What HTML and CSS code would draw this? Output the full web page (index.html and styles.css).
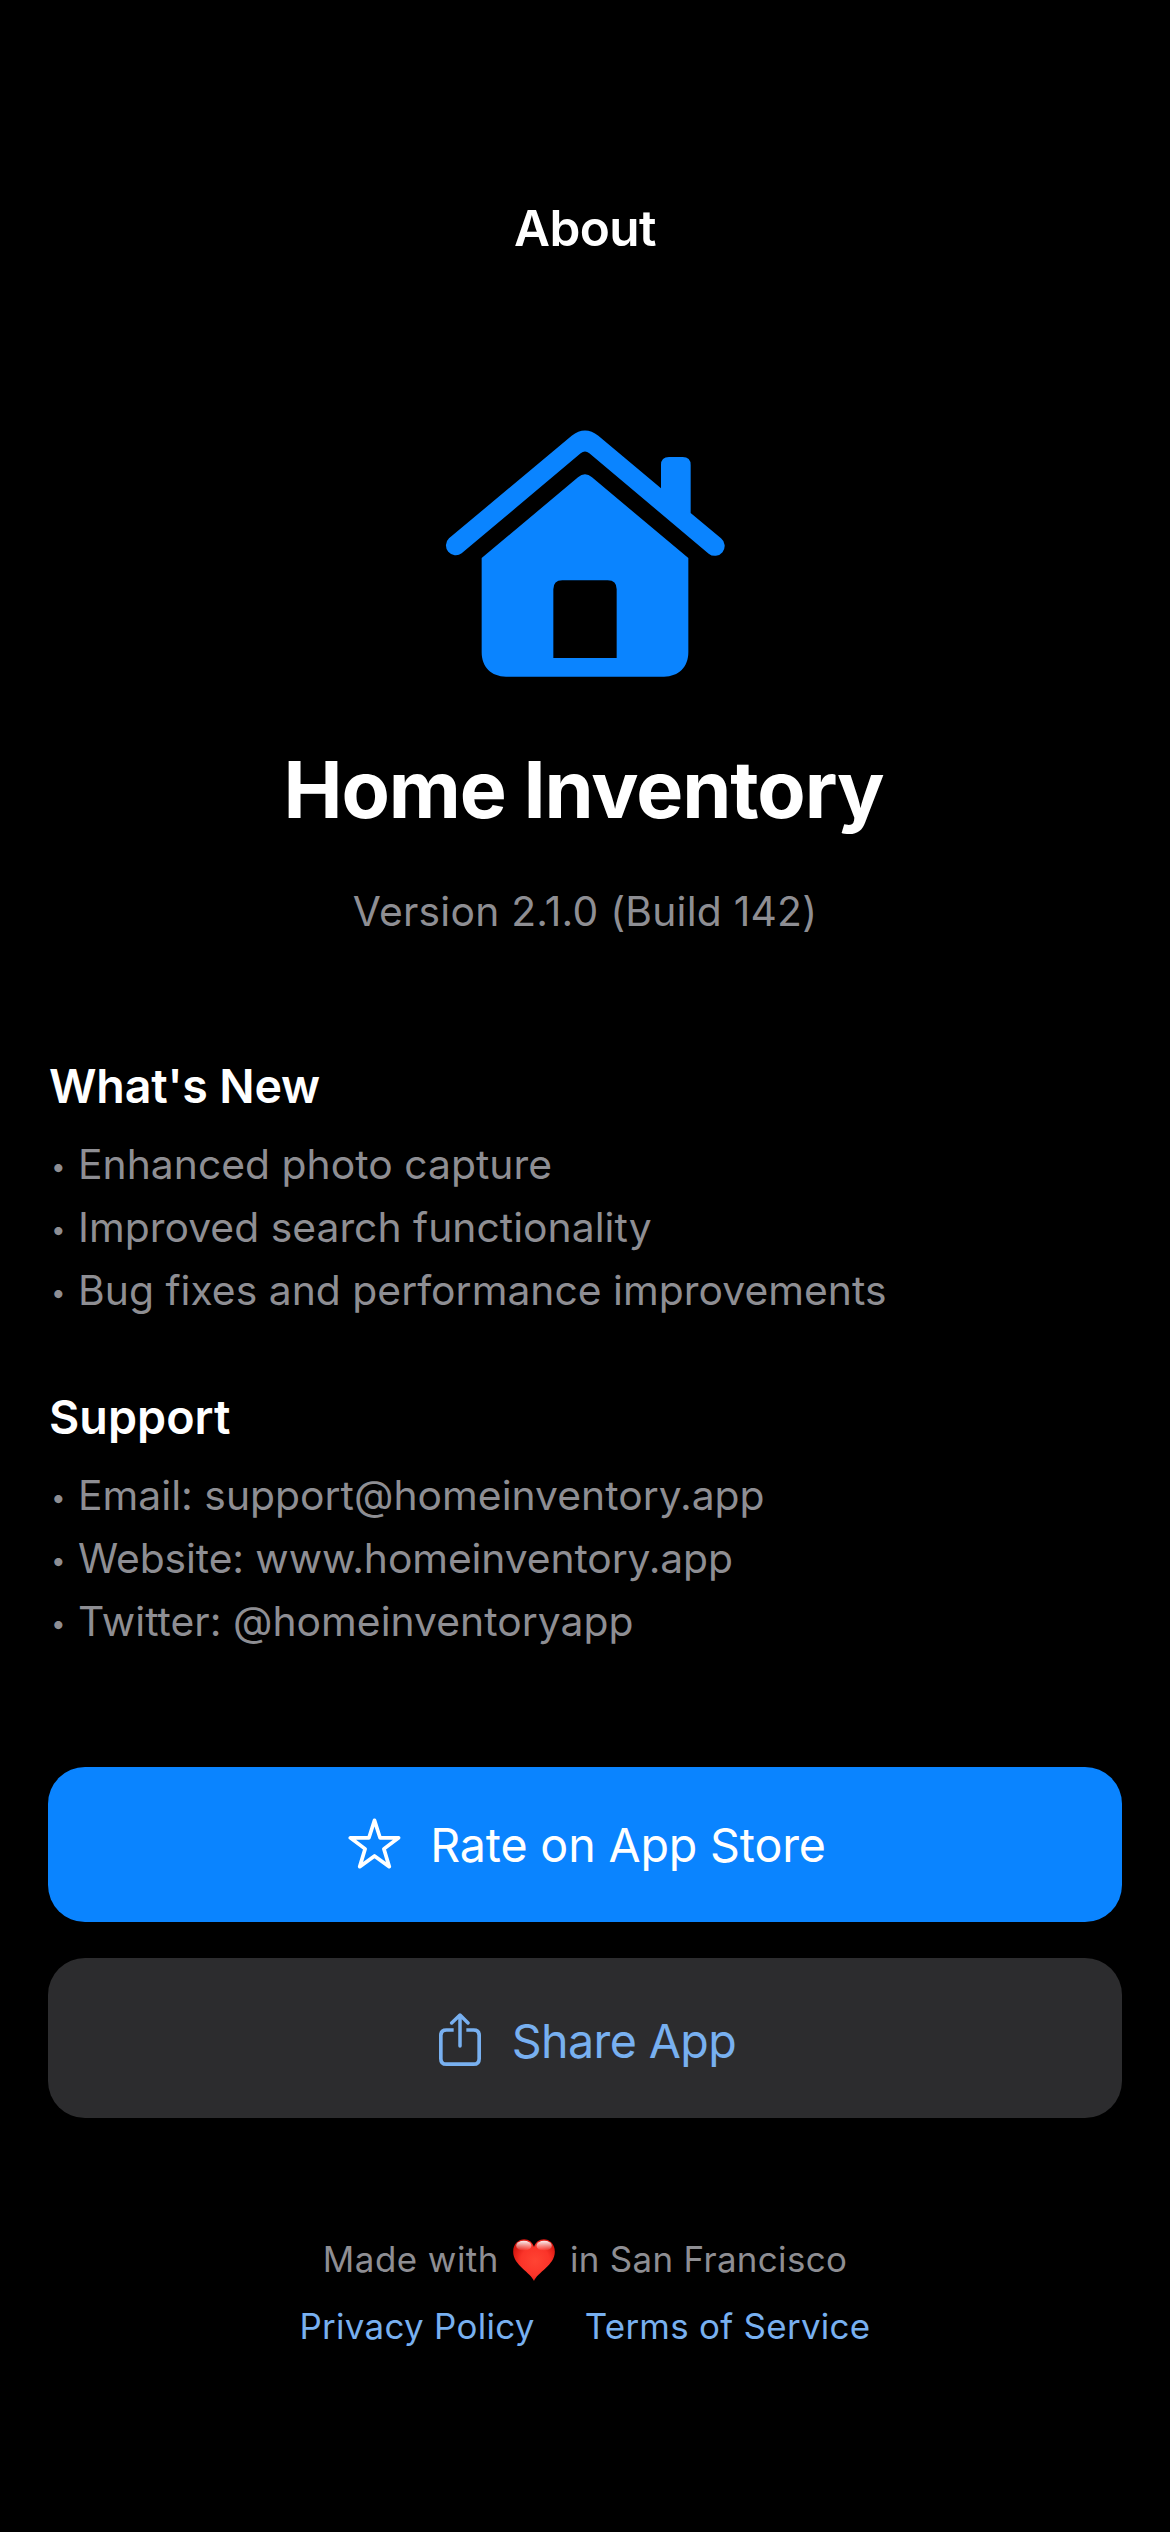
FILE: index.html
```html
<!DOCTYPE html>
<html lang="en">
<head>
<meta charset="utf-8">
<title>About</title>
<link rel="stylesheet" href="styles.css">
</head>
<body>
<main class="screen">
  <header class="nav">About</header>

  <section class="hero">
    <svg class="hero-icon" viewBox="75 90 840 741" aria-hidden="true">
      <path d="M455 107Q495 76 535 107L723 265V195Q723 171 747 171H788Q812 171 812 195V339L903 415A29.5 29.5 0 0 1 866 461L508 160Q495 149 482 160L125 460A29.5 29.5 0 0 1 87 415Z"/>
      <path fill-rule="evenodd" d="M185 474L474 232Q495 214 516 232L805 474V757C805 801 776 830 732 830H258C214 830 185 801 185 757ZM400 774H590V568Q590 541 563 541H427Q400 541 400 568Z"/>
    </svg>
    <h1 class="title">Home Inventory</h1>
    <p class="version">Version 2.1.0 (Build 142)</p>
  </section>

  <section class="info">
    <h2 class="info-title">What's New</h2>
    <ul class="list">
      <li><span class="bullet">•</span>Enhanced photo capture</li>
      <li><span class="bullet">•</span>Improved search functionality</li>
      <li><span class="bullet">•</span>Bug fixes and performance improvements</li>
    </ul>
  </section>

  <section class="info">
    <h2 class="info-title support">Support</h2>
    <ul class="list">
      <li><span class="bullet">•</span>Email: support@homeinventory.app</li>
      <li class="website"><span class="bullet">•</span>Website: www.homeinventory.app</li>
      <li><span class="bullet">•</span>Twitter: @homeinventoryapp</li>
    </ul>
  </section>

  <section class="actions">
    <button class="button rate">
      <svg class="icon-star" viewBox="954 206 158 152" aria-hidden="true">
        <path d="M1033 213L1049.500 265H1105L1061 298L1077 351L1033 319L989 351L1005 298L961 265H1016.500Z"/>
      </svg>
      <span>Rate on App Store</span>
    </button>
    <button class="button share">
      <svg class="icon-share" viewBox="117 789 126 159" aria-hidden="true">
        <path class="tray" d="M161 840H139Q122.500 840 122.500 856V926Q122.500 942.500 139 942.500H221Q237.500 942.500 237.500 926V856Q237.500 840 221 840H199"/>
        <path class="arrow" d="M180 797V888M155 819L180 795L204 819"/>
      </svg>
      <span>Share App</span>
    </button>
  </section>

  <footer class="footer">
    <p class="made">
      <span class="made-with">Made with</span>
      <svg class="heart" viewBox="68 42 125 126" role="img" aria-label="love">
        <defs>
          <radialGradient id="heart-fill" gradientUnits="userSpaceOnUse" cx="134" cy="108" r="72">
            <stop offset="0" stop-color="#ff4433"/>
            <stop offset=".6" stop-color="#fb3429"/>
            <stop offset="1" stop-color="#d4150d"/>
          </radialGradient>
          <linearGradient id="heart-shine" x1="0" y1="0" x2="0" y2="1">
            <stop offset="0" stop-color="#fff" stop-opacity=".95"/>
            <stop offset="1" stop-color="#fff" stop-opacity="0"/>
          </linearGradient>
        </defs>
        <path fill="url(#heart-fill)" d="M130.500 168C121 142 68 121 68 80C68 57 84 43 101 43C115 43 126 52 130.500 66C135 52 146 43 160 43C177 43 193 57 193 80C193 121 140 142 130.500 168Z"/>
        <ellipse fill="url(#heart-shine)" cx="100" cy="62" rx="23" ry="15"/>
        <ellipse fill="url(#heart-shine)" cx="161" cy="62" rx="23" ry="15"/>
      </svg>
      <span class="place">in San Francisco</span>
    </p>
    <nav class="links">
      <a>Privacy Policy</a>
      <a>Terms of Service</a>
    </nav>
  </footer>
</main>
</body>
</html>
```
FILE: styles.css
```css
* { box-sizing: border-box; margin: 0; padding: 0; }

body {
  background: #000;
  color: #fff;
  font-family: Inter, "Liberation Sans", sans-serif;
}

.screen {
  display: flex;
  flex-direction: column;
  width: 1170px;
  height: 2532px;
  padding: 198px 48px 0;
  white-space: nowrap;
}

.nav {
  font-size: 49.5px;
  font-weight: 600;
  line-height: 60px;
  letter-spacing: -0.59px;
  text-align: center;
}

.hero {
  display: flex;
  flex-direction: column;
  align-items: center;
  margin-top: 172px;
}

.hero-icon { width: 280px; height: 247px; fill: #0a84ff; }

.title {
  margin-top: 64px;
  padding-right: 3px;
  font-size: 79px;
  font-weight: 700;
  line-height: 96px;
  letter-spacing: -1.08px;
}

.version {
  margin-top: 44px;
  color: #8e8e93;
  font-size: 40.8px;
  line-height: 60px;
  letter-spacing: 0.23px;
}

.info { margin-top: 65px; padding-left: 1px; }
.hero + .info { margin-top: 115px; }

.info-title {
  font-size: 46.6px;
  font-weight: 600;
  line-height: 60px;
  letter-spacing: -0.19px;
}

.info-title.support { letter-spacing: 0.05px; }

.list {
  margin-top: 17px;
  color: #8e8e93;
  font-size: 40.8px;
  line-height: 63px;
  letter-spacing: 0.03px;
  list-style: none;
}

.list li { display: flex; height: 63px; }
.list .website { letter-spacing: -0.1px; }
.bullet { width: 29px; padding: 2px 0 0 2px; font-size: 26px; }

.actions {
  display: flex;
  flex-direction: column;
  gap: 36px;
  margin-top: 114px;
}

.button {
  display: flex;
  align-items: center;
  justify-content: center;
  border: 0;
  border-radius: 37px;
  font: 400 46.6px/60px Inter, "Liberation Sans", sans-serif;
}

.rate {
  gap: 29px;
  height: 155px;
  padding-left: 4px;
  background: #0a84ff;
  color: #fff;
  letter-spacing: -0.17px;
}

.share {
  gap: 31px;
  height: 160px;
  padding: 5px 0 0 5px;
  background: #2c2c2e;
  color: #78b0f0;
  letter-spacing: -0.6px;
}

.icon-star, .icon-share {
  fill: none;
  stroke: currentColor;
  stroke-width: 11;
  stroke-linejoin: round;
}

.icon-star { width: 53px; height: 51px; margin-bottom: 2px; }
.icon-share { width: 42px; height: 53px; margin-bottom: 2px; }
.arrow { stroke-linecap: round; stroke-width: 10.5; }

.footer {
  display: flex;
  flex-direction: column;
  gap: 13px;
  margin-top: 114px;
  font-size: 34.9px;
  line-height: 54px;
}

.made {
  display: flex;
  align-items: center;
  justify-content: center;
  color: #8e8e93;
}

.made-with { letter-spacing: 0.49px; }
.place { letter-spacing: 0.34px; }
.heart { width: 42px; height: 42px; margin: 2px 15px 0 14px; }

.links {
  display: flex;
  justify-content: center;
  gap: 50px;
  color: #78b0f0;
  letter-spacing: 0.3px;
}
```
